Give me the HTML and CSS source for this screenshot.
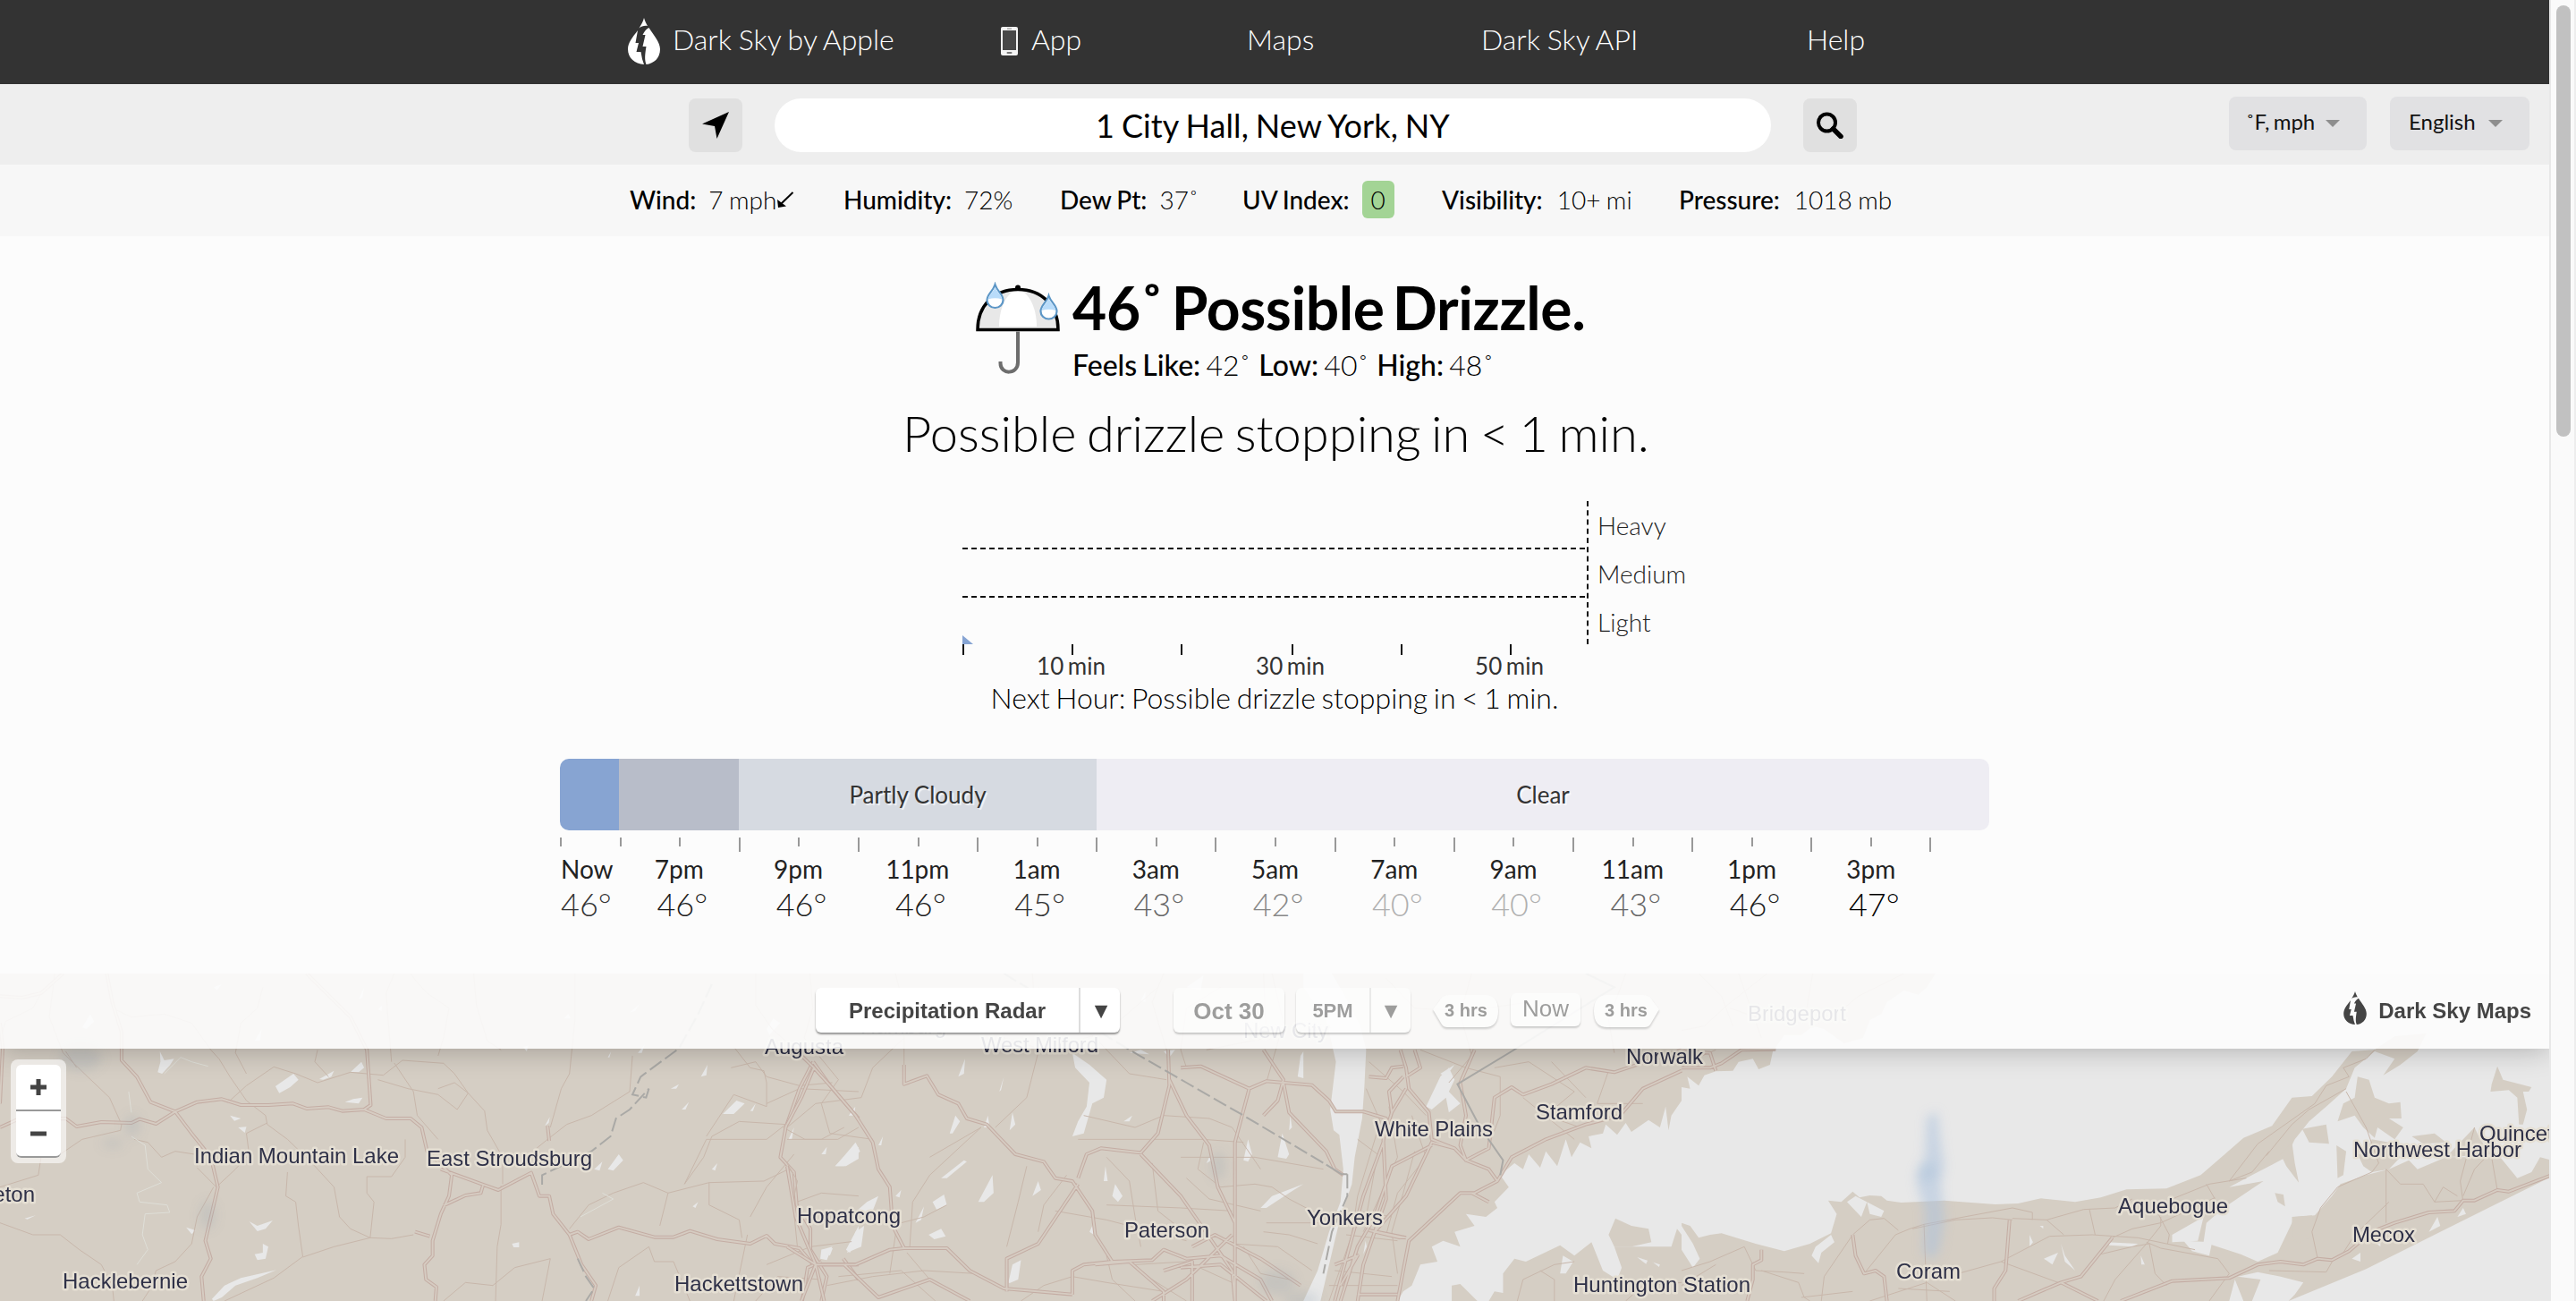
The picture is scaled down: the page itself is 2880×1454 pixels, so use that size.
FILE: index.html
```html
<!DOCTYPE html>
<html lang="en">
<head>
<meta charset="utf-8">
<title>Dark Sky - 1 City Hall, New York, NY</title>
<link rel="stylesheet" href="styles.css">
</head>
<body>
<svg class="defs" width="0" height="0">
  <symbol id="drop" viewBox="0 0 36 52">
    <path fill="currentColor" d="M18 0C19.200 4 20.500 6.500 22 9C18 8.500 15 9.500 12.500 11.500C15 7.500 17 4 18 0Z"/>
    <path fill="currentColor" d="M11 14C5 22 0 27.500 0 35C0 45 8 51.500 18 52L16 46L14.500 38H9.500L12 28H8.500L11 14Z"/>
    <path fill="currentColor" d="M23.500 11C28.500 19 36 27 36 35C36 45 29 51 20.500 52C18.500 47 19 41 20.500 32H16.500L19.500 19H16.500C18.500 15 20.500 12.500 23.500 11Z"/>
  </symbol>
</svg>
<div class="window">
<div class="page">
  <header class="nav">
    <a class="nav-brand"><svg class="logo" width="36" height="52"><use href="#drop"/></svg><span>Dark Sky by Apple</span></a>
    <a class="nav-app"><svg class="phone" width="19" height="32" viewBox="0 0 19 32"><rect width="19" height="32" rx="2" fill="#f4f4f4"/><rect x="2" y="4" width="15" height="22" fill="#484848"/><rect x="7" y="1.500" width="5" height="1" fill="#888"/><rect x="6.500" y="28" width="6" height="2" rx="1" fill="#777"/></svg><span>App</span></a>
    <a class="nav-maps">Maps</a>
    <a class="nav-api">Dark Sky API</a>
    <a class="nav-help">Help</a>
  </header>

  <div class="search">
    <button class="icon-button"><svg width="30" height="30" viewBox="0 0 30 30"><path d="M30 0L16.500 30L14 16L0 13.500Z"/></svg></button>
    <div class="search-field">1 City Hall, New York, NY</div>
    <button class="icon-button"><svg width="30" height="30" viewBox="0 0 30 30" fill="none" stroke="#000"><circle cx="11.500" cy="12" r="9.500" stroke-width="4"/><path d="M18.500 19L27 27.500" stroke-width="5.500" stroke-linecap="round"/></svg></button>
    <div class="select units"><span>˚F, mph</span><i class="caret"></i></div>
    <div class="select language"><span>English</span><i class="caret"></i></div>
  </div>

  <div class="details">
    <div class="detail wind"><b>Wind:</b><span>7 mph</span><svg width="20" height="19" viewBox="0 0 20 19"><path d="M18.500 1L5 14" stroke="#000" stroke-width="2"/><path d="M1 9L2 18L11 16.500Z"/></svg></div>
    <div class="detail humidity"><b>Humidity:</b><span>72%</span></div>
    <div class="detail dew"><b>Dew Pt:</b><span>37˚</span></div>
    <div class="detail uv"><b>UV Index:</b><span class="uv-badge">0</span></div>
    <div class="detail visibility"><b>Visibility:</b><span>10+ mi</span></div>
    <div class="detail pressure"><b>Pressure:</b><span>1018 mb</span></div>
  </div>

  <section class="current">
    <svg class="umbrella" width="96" height="106" viewBox="0 0 96 106">
      <path d="M3 53.500C3 27 21 8.500 48 8.500S93 27 93 53.500Z" fill="#e8e8e8"/>
      <path d="M27 50C27 31 34 15 44 10H52C62 15 69 31 69 50Z" fill="#fff"/>
      <path d="M3 53.500C3 27 21 8.500 48 8.500S93 27 93 53.500Z" fill="none" stroke="#000" stroke-width="3.500"/>
      <circle cx="48" cy="6.500" r="3"/>
      <path d="M48 55.500V90C48 104 28.500 104 28.500 91V89" fill="none" stroke="#6d6d6d" stroke-width="4"/>
      <g stroke="#5c96c6" stroke-width="2.200"><path d="M22.500 3C25 11 31.500 14 31.500 20.500A9 8.500 0 0 1 13.500 20.500C13.500 14 20 11 22.500 3Z" fill="#fff"/><path d="M82.500 15.500C85 23.500 91.500 26 91.500 33A9 8.500 0 0 1 73.500 33C73.500 26 80 23.500 82.500 15.500Z" fill="#fff"/></g>
      <path d="M22.500 6C25 12 29.500 14.500 30.500 19.500Q22.500 17 14.500 19.500C15.500 14.500 20 12 22.500 6ZM82.500 18.500C85 24.500 89.500 27 90.500 32Q82.500 29.500 74.500 32C75.500 27 80 24.500 82.500 18.500Z" fill="#b9dcfa"/>
    </svg>
    <div class="current-text">
      <h1>46˚ Possible Drizzle.</h1>
      <p><b>Feels Like:</b> <span>42˚</span><b>Low:</b> <span>40˚</span><b>High:</b> <span>48˚</span></p>
    </div>
  </section>
  <div class="summary">Possible drizzle stopping in &lt; 1 min.</div>

  <section class="hour-chart">
    <svg class="plot" width="700" height="172" viewBox="0 0 700 172">
      <path d="M0 53H699M0 107H699" stroke="#111" stroke-width="2" stroke-dasharray="6 4"/>
      <path d="M699 0V160" stroke="#111" stroke-width="2" stroke-dasharray="6 4.270"/>
      <path d="M0 150L12 160H0Z" fill="#86a4d3"/>
      <path d="M1 160V172M123 160V172M245 160V172M369 160V172M491 160V172M613 160V172" stroke="#111" stroke-width="2"/>
    </svg>
    <div class="levels"><span>Heavy</span><span>Medium</span><span>Light</span></div>
  </section>
  <div class="minutes"><span>10 min</span><span>30 min</span><span>50 min</span></div>
  <div class="next-hour">Next Hour: Possible drizzle stopping in &lt; 1 min.</div>

  <section class="timeline">
    <div class="stripes"><span class="drizzle"></span><span class="overcast"></span><span class="partly">Partly Cloudy</span><span class="clear">Clear</span></div>
    <div class="ticks"><i></i><i></i><i></i><i></i><i></i><i></i><i></i><i></i><i></i><i></i><i></i><i></i><i></i><i></i><i></i><i></i><i></i><i></i><i></i><i></i><i></i><i></i><i></i><i></i></div>
    <div class="hours"><span>Now</span><span>7pm</span><span>9pm</span><span>11pm</span><span>1am</span><span>3am</span><span>5am</span><span>7am</span><span>9am</span><span>11am</span><span>1pm</span><span>3pm</span></div>
    <div class="temps"><span class="t45">46°</span><span class="t46">46°</span><span class="t46">46°</span><span class="t46">46°</span><span class="t45">45°</span><span class="t43">43°</span><span class="t42">42°</span><span class="t40">40°</span><span class="t40">40°</span><span class="t43">43°</span><span class="t46">46°</span><span class="t47">47°</span></div>
  </section>

  <section class="map">
    <svg class="map-tiles" width="2850" height="366" viewBox="0 0 2850 366">
      <defs><filter id="soft" x="-50%" y="-50%" width="200%" height="200%"><feGaussianBlur stdDeviation="6"/></filter></defs>
      <rect width="2850" height="366" fill="#d5cec4"/>

      <!-- Pennsylvania and western New Jersey -->
      <g transform="translate(0 -28) scale(.6122 .33333)">
        <path class="water" d="M292 345L300 375L318 370L310 392L296 420L288 415L293 380ZM503 462L520 440L536 420L545 440L530 465L510 485ZM583 438L610 410L605 430L590 440ZM640 415L660 380L665 400L655 415ZM455 915L470 930L498 912L485 940L470 948ZM480 990L490 1000L485 1040L470 1045L465 1025L480 1020ZM387 1175L410 1130L440 1105L505 1078L470 1105L430 1130L405 1170L390 1182ZM435 600L450 598L447 618ZM420 560L440 570L428 578ZM340 935L357 945L350 958ZM935 990L948 985L948 1002L938 1002ZM1085 740L1100 715L1095 745ZM1110 740L1130 690L1138 710L1120 745ZM1320 555L1345 510L1360 520L1340 555ZM1525 730L1540 700L1568 665V705L1545 730ZM1545 1010L1568 930V975L1552 1020ZM1300 740L1310 720L1306 745ZM1245 540L1258 515L1252 540ZM1165 350L1178 320L1172 350ZM1110 365L1116 345L1113 365ZM1280 430L1292 390L1290 425ZM1225 470L1240 455L1235 470ZM1500 1010L1520 1000L1510 1045L1498 1040ZM1500 690L1510 665L1508 690ZM1440 640L1450 600L1446 640ZM1265 865L1275 850L1270 870ZM1160 1165L1168 1130L1168 1165ZM45 905L65 895L50 908ZM995 595L1004 565L1002 585ZM1550 560L1562 530L1560 560ZM1370 545L1380 520L1375 545ZM955 330L965 325L962 345ZM630 515L645 505L662 500L655 520ZM390 130L405 120L396 140ZM150 265L165 220L172 245L158 270ZM655 170L665 130L662 165ZM1400 270L1412 235L1425 250L1405 290ZM465 310L478 270L475 310ZM1030 235L1038 218L1042 235ZM1150 215L1168 185L1160 210ZM690 205L698 190L697 210Z"/>
        <g class="minor">
          <path d="M75 150L60 200L10 245L0 310M205 200L240 230L300 220L350 250L385 340L400 370L420 430L450 510L485 560L488 590L525 640L570 720L610 800L620 900L640 940L676 970L715 973L755 960M420 510L450 460L500 397L540 420L580 450L640 415L700 425L735 375L810 385L830 420L855 485L885 545L890 610L918 700L918 790M580 340L575 380L600 430M480 130L470 200L440 250L430 350L450 420M715 380L705 150L720 84M720 384L755 480L762 560L800 640M800 470L830 450L855 485L835 540L800 490L745 470L690 440M750 84L760 110L780 150L820 200L810 300L800 360M865 84L870 190L890 310L915 340M1050 84L1050 240L1040 420L1025 470L1005 600M1155 360L1150 480L1080 560L1035 590L1000 640L980 670M100 84L90 230L115 350L160 430L200 500L222 590L220 610L150 640L110 690L75 700L70 760L0 800M120 345L140 400M245 640L270 650L295 700L320 680L355 690L360 730M390 800L360 900L350 990L320 1050L285 1080L275 1140L260 1182M360 735L395 800L430 740L455 690L450 620L488 585M740 640L740 700L715 765H670V820L683 850L676 970M525 750L522 830L540 850L545 930L553 1033L500 1105L410 1182M553 1035L610 1000L676 970M0 920L60 960L110 960L145 1010L185 1060L205 1130L208 1182M915 795L915 925L908 1000L905 1182M810 1182L850 1120L900 1130L940 1070L1005 1040L990 1182M1040 940L1075 860L1120 820L1175 785L1220 820L1295 785L1395 780L1440 740M1220 820L1205 930M1295 785V860L1350 910L1355 970M1250 790L1290 640L1400 640L1435 590L1350 580L1300 630L1285 700L1250 790M1110 1182L1130 1070L1185 1000L1195 1050L1230 1050L1260 1182M1335 400L1380 380L1400 430L1460 460L1520 450M1340 330L1370 400L1395 410L1400 450L1400 530L1340 490L1290 630M1380 84L1380 190L1410 270L1490 400M1365 960L1340 1182M1450 690L1400 800L1370 900M1455 850L1500 820L1568 830M1430 600L1470 640L1530 640L1568 600M1400 520L1460 470L1568 480M1400 1060L1480 1000L1568 980M1380 1182L1420 1100L1500 1110"/>
        </g>
        <g class="major-case"><path id="pa-major" d="M195 84L205 180L222 280L222 375L250 430L275 515L320 547L350 620L385 700L398 800L375 980L385 1040L368 1100L372 1182M0 600L30 575L120 570L140 597L185 582L240 585L255 572L285 588L320 547L360 515L405 505L440 525H490L535 520L560 537L600 532L625 545L665 540L705 570L750 570L770 600L780 680L825 760L820 830L805 890L790 980V1030L775 1060L778 1110L797 1135L795 1182M560 84L640 230L670 340L677 525L665 540M785 965L758 950M805 740L880 790L910 810L970 752L985 830H1003L1010 890L1040 960L1055 950L1075 975L1130 935L1195 968H1230L1260 947L1310 975L1370 990L1400 963L1415 990L1460 1005L1485 1060H1568M810 862L850 828L878 820L882 795M1485 380L1460 470L1435 600L1425 700L1450 750L1455 860L1480 940L1480 1010L1510 1100L1500 1182M1485 380L1520 470L1568 570M1040 960L1062 1060L1088 1130L1080 1182M1465 1182L1475 1070L1500 1050M1540 1040L1568 1110M0 250L5 330L0 520M0 160L40 165L75 150L115 84M1000 595L1003 645"/></g>
        <use href="#pa-major" class="major-core"/>
        <path class="border" d="M1300 120L1275 220L1240 335L1170 430L1155 490L1180 500L1185 470L1150 540L1125 570L1115 630L1080 680L990 760V800M1055 1040L1070 1100L1085 1140L1070 1182"/>
        <path class="river" d="M235 480L240 550M240 630L265 660L270 740L295 785L250 820L255 850L305 860L310 885L265 890L260 960L270 1010L250 1060M300 420L330 365L350 380L380 395M1100 820L1120 840L1060 900"/>
      </g>

      <!-- New Jersey, Hudson and Long Island Sound -->
      <g transform="translate(880 -28) scale(.6378 .33333)">
        <path class="water" d="M905 84H955L975 150L1005 260L1015 340L1012 460L1008 570L995 700L990 790L970 900L955 1020L935 1182H905L930 1080L950 950L970 850L975 740L968 625L958 610L952 540L962 380L945 240L905 130ZM1568 510L1550 560L1545 610L1540 530L1530 600L1510 575L1480 615L1470 585L1455 625L1435 590L1430 620L1405 630L1410 670L1390 650L1375 700L1365 640L1350 730L1330 680L1320 735L1300 690L1290 740L1275 720L1250 760L1265 800L1240 850L1245 870L1225 900L1190 890L1205 930L1170 950L1180 1000L1150 980L1130 1000L1140 1050L1110 1060L1095 1130L1080 1150L1070 1182H1165L1165 1130L1180 1125L1210 1182H1230L1240 1150L1255 1155V1090L1275 1040L1295 1050L1355 995L1380 1030L1410 985L1430 1080L1455 1110L1463 1070L1450 1000L1550 1000L1560 940L1568 960ZM500 350L530 390L560 440L555 500L535 520L520 620L500 630L510 580L525 530L530 450L505 400ZM300 430L312 370L310 420ZM372 480L380 430L375 475ZM285 620L295 560L303 580L290 620ZM390 610L395 550L400 590ZM345 600L352 560L355 600ZM270 770L310 710L315 715L280 770ZM335 850L360 760L362 820L345 850ZM85 730L120 650L128 680L100 730ZM105 1020L120 950L135 930L130 1000ZM388 1120L395 1060L410 1045L405 1110L390 1122ZM860 700L868 620L880 690L875 705ZM570 830L575 790L588 830L580 850ZM555 780L558 730L562 780ZM800 710L808 640L815 690L808 715ZM830 870L850 830L905 790L880 820L840 870ZM1120 530L1145 430L1160 400L1170 440L1160 480L1180 520L1160 550L1155 500L1130 540ZM1145 420L1170 390L1155 430ZM895 430L900 360L905 345L905 435ZM880 610L882 560L885 600ZM255 850L275 825L280 860L262 875ZM430 830L440 780L445 810ZM530 950L540 910L538 960ZM60 1010L80 1005L75 1030ZM248 960L270 940L278 965L258 975ZM160 660L168 630L165 660ZM190 830L200 810L197 835ZM700 130L730 90L725 140ZM620 175L628 145L628 180ZM660 345L680 340L670 365ZM225 920L240 865L235 910ZM735 720L740 700L744 710ZM1010 1025L1014 980L1016 1000ZM110 900L140 850L160 830L150 880ZM600 350L620 340L635 355ZM590 580L605 560L600 580ZM1355 1090L1360 1030L1378 1050L1365 1090ZM1490 1035L1530 1060L1525 1085L1500 1050Z"/>
        <path class="land" d="M1440 960L1452 905L1480 930L1510 940L1515 985L1480 1000L1450 1000ZM1500 1080L1510 1040L1530 1070L1525 1100Z"/>
        <g class="minor">
          <path d="M40 84L45 200L30 300L90 440L60 520L75 620L150 640M190 84L205 200L205 390M205 300L150 400L130 500L50 520L0 600M430 84L440 350L420 500L365 600M440 130L540 300L600 420L665 440M380 300L450 340L560 280L650 130M660 84L640 180L665 340M735 340L840 300L835 84M250 700L340 600L250 760L220 850L215 1000M0 640L60 640L100 600M420 730L405 850L385 1000M490 760L450 860L440 950M520 560L610 600L660 560L740 570L780 600L830 740M510 640L640 640L730 640L800 650M690 700H820L940 740M730 650L720 740L760 800L820 790L850 800L880 840L940 900M560 860L690 870L780 880M560 700L600 780L610 900L620 1000M470 880L560 910L640 950L700 980M640 720L650 880L690 940M700 770L740 840L830 880M840 920H940M835 950L880 960L930 990M780 990L860 1000L920 1080M640 1110L700 1182M560 1030L570 1110L610 1182M410 1182L450 1130L500 1100L560 1120L660 1150M1015 470L1040 580L1000 830L990 960L950 1182M1000 640L1035 690L1015 900M1055 530L1070 700L1030 870L1010 950M1095 560L1120 700L1070 820L1050 960M1100 680L1080 820L1060 950L1070 1090M1020 380L1080 480L1120 560M1200 84L1180 220L1200 360L1160 450M1050 100L1100 200L1190 210L1300 180M1110 340L1190 400L1250 430L1250 560L1230 660M1240 400L1300 380L1380 480L1330 560L1390 600M1290 500L1380 640M1340 380L1400 500M1440 410L1420 520L1500 520M1470 84L1440 240L1450 350M0 720L18 780L10 850L18 1000M90 1100L200 1080L260 1182M70 1130L150 1100L240 1080L330 1090M180 1090L190 960L180 880M210 1020L250 1110M200 920L240 900L280 860M1280 1182L1290 1110L1345 1060L1380 1050M1345 1182V1110L1320 1080M1470 1182L1500 1130L1568 1120M610 1060L700 1050L780 1120M800 1000L830 1090L880 1110M960 1080L1060 1100M950 1130H1070M980 960L1070 980M1000 880L1060 900M850 84L870 250L840 450M760 130L700 200L690 340L700 400"/>
        </g>
        <g class="major-case"><path id="nj-major" d="M0 590L25 500L47 400L20 350M47 400L80 470L120 560L150 650L160 740L180 800L185 930L205 1005H280L320 1080L380 1140L500 1160M205 390V455L245 427L265 490L300 520L315 570L350 590L400 690L450 715L470 770L500 780L535 880L540 960L570 1050M0 1000L50 1060H120L180 1010L205 1005M25 1182L50 1060L15 900L0 730M50 1060L65 1182M100 1060L160 1170L250 1110L320 1182M510 790L440 990L385 1040V1150M510 770L525 690L550 670L620 685L650 620L670 460L668 340M620 690L690 830L730 940L780 1080L785 1182M670 440L700 560L740 660L755 800L785 920V1060M690 400L725 395L810 470L840 445L920 458L950 510L962 547H1010L1050 570L1045 650L1010 830L960 1182M810 470L785 650V800L785 1182M870 450L880 550L945 680L960 740L975 760M835 340L870 440L860 510L835 560M500 1160L500 1080L520 1060L570 1050L640 1045L660 1010L700 1040L760 1030L830 1110L850 1182M540 1060L600 1050L660 1150L660 1182M660 1080L710 1050V1182M690 1070L760 1060L840 1182M710 1000L750 960L830 1040L900 1130M640 1182L700 1110L780 960M1075 340L1085 400L1090 470L1125 550L1130 640L1170 670L1190 710L1230 740L1245 780L1205 820H1180L1090 980L1080 1080L1070 1182M1020 430L1050 435L1060 400L1080 395M1100 340L1110 400L1085 430M1205 340L1180 450L1190 560L1180 660L1190 710L1230 670L1240 500L1270 465L1290 490L1340 455L1400 400L1450 415L1568 340M1568 410L1500 470L1460 560L1400 590L1330 640L1270 700L1245 780M1130 660L1060 730L1030 900L1000 1000L970 1182M1045 640L1050 840L1010 1060L1000 1182M1060 550L1055 480L1080 430M1085 470L1060 550L1045 640M1170 670L1130 650L1085 830L1030 950L1075 970M1085 970L1020 945M1200 820L1230 850M960 1060L1000 1030L970 1130M1000 1160H1070"/></g>
        <use href="#nj-major" class="major-core"/>
        <path class="border dashed" d="M380 84L600 340L700 450L800 560L945 725"/>
        <path class="border solid" d="M945 725L972 757H982M1270 345L1175 455L1215 600L1255 710L1250 760M1400 84L1450 130L1270 345"/>
        <path class="border dashed" d="M982 757V830L955 950L940 1090"/>
      </g>

      <!-- Connecticut coast and Long Island -->
      <g transform="translate(1880 -28) scale(.6378 .33333)">
        <path class="water" d="M445 84L430 130L415 155L390 140L360 180L350 220L330 240L318 300L285 318L250 270L230 260L210 290L180 290L160 345L155 390L135 405L125 370L100 380L90 410L60 412L40 425L30 460L10 430L15 470L0 465V920L15 930L30 970L50 960L70 955L130 990L180 1015L225 990L262 955L272 890L257 845L280 850L300 815L312 835L330 828L350 830L360 845L385 852L460 845L550 858L590 855L630 838L690 850L735 835L780 808L850 805L910 760L940 710L985 635L1035 595L1070 500L1105 495L1140 430L1175 345L1215 340L1250 295L1305 285L1290 345L1260 390L1230 425L1250 370L1215 345L1180 400L1165 470L1130 530L1100 580L1075 640L1060 700L1000 760L960 800L1020 780L950 870L920 920L915 985L980 1025L1010 1050L1045 1020L1075 900L1110 895L1140 830L1155 790L1200 760L1240 740L1275 710L1290 740L1340 700L1435 700L1465 770L1490 750L1505 700L1525 710V84Z"/>
        <path class="water" d="M1064 1182L1200 1075L1330 950L1525 765V1182ZM975 1100L1010 1085L1050 1100L1090 1120L1075 1160L1064 1182H1000L1015 1110ZM960 1182L970 1110L985 1182ZM0 930L20 990L32 1040L20 1070L0 1010ZM235 1000L262 960L268 985L245 1020L240 1055L228 1030ZM290 850L305 830L355 880L350 900L330 890L325 850L315 900L300 870ZM635 1040L660 1020L650 1060ZM610 960L616 985L610 1000ZM628 930H634V940ZM665 990L672 1030L690 1080L672 1050ZM745 985L800 990L790 1000L750 995ZM805 1030L812 1060L806 1060ZM1310 950L1325 900L1330 930ZM1360 900L1370 870L1375 890ZM1215 985L1225 960L1225 1000ZM860 960L915 900L905 980L860 985ZM880 980L930 985L925 1030L895 1015ZM1175 1040L1190 1020L1190 1050Z"/>
        <path class="land" d="M1185 430L1205 440L1215 500L1240 520L1260 515L1262 570L1240 570L1265 600L1250 640L1220 600L1215 635L1195 600L1180 560L1150 580L1160 520L1180 500ZM1108 500L1120 490L1118 520ZM1088 605L1130 590L1135 655L1100 650ZM1070 650L1075 720L1082 785L1060 730L1050 690ZM1148 660L1165 680L1160 760L1150 770ZM1040 820L1055 825L1058 865L1045 850ZM1070 900L1105 895L1110 960L1080 990L1070 960ZM1185 690L1240 670L1260 700L1240 740L1210 750L1195 730ZM1340 700L1390 600L1400 640L1420 690ZM1280 630L1320 620L1340 650L1300 655ZM1420 455L1430 395L1440 440L1490 465L1485 480L1475 480L1482 540L1475 590L1468 590L1465 500L1450 475L1418 480ZM1210 640L1240 650L1260 670L1240 690L1200 680Z"/>
        <g class="minor">
          <path d="M0 275L40 260L80 190L150 84M30 84L70 160L90 260M230 84L215 250M390 84L310 160L260 240M100 84L140 300M85 200L160 250M0 390L60 340M0 1080L50 1050L110 1000L130 1080L180 1085L215 1090M0 1130L60 1060M140 1080L205 1120L215 1170L225 1182M245 1182L250 1100L300 960L330 910L355 905L380 945M320 1090L375 960L400 940L425 925L580 870L615 885V910M425 925L430 1182M485 1090L560 1050L645 965L720 960L800 970L850 990L900 1010M580 905L640 910L705 875L760 870L790 840M560 1050L660 1120M640 910L670 960M715 875L725 960M755 970L790 940L840 920L920 850L935 835M830 870L855 960L852 990M840 900V930L815 990L760 1110L740 1182M840 880L860 840L925 790L990 770M820 990L830 1090L850 1130M815 985L840 1005L940 1040L960 1090L925 1182M1025 695L1040 660L1070 590L1100 540L1165 470M920 790L935 840M960 780L1000 750L1030 680M1030 1080L1130 1085L1145 1035M1150 800L1120 870L1105 950L1115 1040M1150 800L1210 750L1222 720L1200 600L1165 480M1235 740V920M1235 740L1260 790L1300 790L1320 850L1370 845M1370 850L1365 780L1390 600M1320 850L1335 800L1360 830M1240 850L1180 960L1160 1020M1370 830L1390 740L1410 700M1430 810L1420 700M330 1182L430 1120L480 1182M210 1170L300 1150M380 1140L470 1150"/>
        </g>
        <g class="major-case"><path id="li-major" d="M0 400L50 400L70 385L105 340L165 338M60 410L50 350L0 345M140 1010V1045L125 1060V1110L115 1182M300 960L305 1030L320 1090L340 1080L355 1100L360 1182M575 910L568 1080L548 1140V1182M590 1182L665 1120L700 1100L755 970M665 1120L730 1182M770 1182L860 1115L960 1105L1010 1060L1050 1050L1090 1060L1115 1040L1140 1045L1170 1015L1210 950L1250 920L1310 885L1355 880L1370 845H1390L1430 810L1450 815L1525 760"/></g>
        <use href="#li-major" class="major-core"/>
        <g class="minor"><path d="M735 1025L790 1000L820 990M405 940L480 910L545 903L580 910M960 780L1010 655L1110 520L1130 460L1170 430L1160 400L1200 370L1215 340"/></g>
      </g>

      <g filter="url(#soft)" fill="#a9c2dd">
        <path d="M2154 160L2166 155L2170 190L2174 215L2170 235L2174 275L2168 310L2160 320L2150 312L2152 265L2144 240L2142 225L2152 205Z" opacity=".5"/><circle cx="2155" cy="222" r="11" opacity=".4"/>
        <g fill="#8d9aa8" opacity=".2"><ellipse cx="90" cy="95" rx="24" ry="14"/><ellipse cx="148" cy="170" rx="9" ry="12"/><ellipse cx="126" cy="190" rx="12" ry="5"/><ellipse cx="232" cy="270" rx="9" ry="16"/><ellipse cx="1362" cy="215" rx="8" ry="16"/><ellipse cx="1428" cy="345" rx="20" ry="14"/><ellipse cx="1455" cy="365" rx="20" ry="10"/></g>
      </g>

      <g class="places">
        <text x="855" y="90" textLength="88">Augusta</text>
        <text x="1097" y="88" textLength="131">West Milford</text>
        <text x="962" y="67" textLength="96">Hamburg</text>
        <text x="1390" y="72" textLength="95">New City</text>
        <text x="1954" y="53" textLength="110">Bridgeport</text>
        <text x="1818" y="101" textLength="86">Norwalk</text>
        <text x="1717" y="163" textLength="97">Stamford</text>
        <text x="1537" y="182" textLength="132">White Plains</text>
        <text x="217" y="212" textLength="229">Indian Mountain Lake</text>
        <text x="477" y="215" textLength="185">East Stroudsburg</text>
        <text x="39" y="255" text-anchor="end">Hazleton</text>
        <text x="70" y="352" textLength="140">Hacklebernie</text>
        <text x="891" y="279" textLength="116">Hopatcong</text>
        <text x="754" y="355" textLength="144">Hackettstown</text>
        <text x="1257" y="295" textLength="95">Paterson</text>
        <text x="1461" y="281" textLength="85">Yonkers</text>
        <text x="1759" y="356" textLength="198">Huntington Station</text>
        <text x="2120" y="341" textLength="72">Coram</text>
        <text x="2368" y="268" textLength="123">Aquebogue</text>
        <text x="2630" y="300" textLength="70">Mecox</text>
        <text x="2772" y="187">Quincetree Landing</text>
        <text x="2631" y="205" textLength="188">Northwest Harbor</text>
      </g>
    </svg>

    <div class="map-bar">
      <div class="control layer"><span>Precipitation Radar</span><i>▼</i></div>
      <div class="time-controls">
        <div class="control date"><span>Oct 30</span></div>
        <div class="control time"><span>5PM</span><i>▼</i></div>
        <div class="step back"><svg width="74" height="38" viewBox="0 0 74 38"><path d="M0 17L10 34Q12 37 16 37H58Q73 37 73 19T58 1H18Q10 1 7 8Z"/></svg><span>3 hrs</span></div>
        <div class="now">Now</div>
        <div class="step ahead"><svg width="74" height="38" viewBox="0 0 74 38"><path d="M74 17L64 34Q62 37 58 37H16Q1 37 1 19T16 1H56Q64 1 67 8Z"/></svg><span>3 hrs</span></div>
      </div>
      <a class="maps-link"><svg width="26" height="37"><use href="#drop"/></svg><span>Dark Sky Maps</span></a>
    </div>
    <div class="zoom-control">
      <button><svg width="20" height="20"><path d="M1 10H19M10 1V19"/></svg></button>
      <button><svg width="20" height="20"><path d="M1 10H19"/></svg></button>
    </div>
  </section>
</div>
<div class="scrollbar"><div class="thumb"></div></div>
</div>
</body>
</html>
```
FILE: styles.css
```css
* { box-sizing: border-box; }
body { margin: 0; background: #fcfcfc; color: #000; font-family: Lato, sans-serif; overflow: hidden; }
button { border: 0; padding: 0; font: inherit; display: flex; align-items: center; justify-content: center; }
i { font-style: normal; }
.defs { position: absolute; }
.window { display: flex; width: 2880px; height: 1454px; }
.page { width: 2850px; height: 1454px; overflow: hidden; display: flex; flex-direction: column; }
.page > * { flex-shrink: 0; }

.scrollbar { position: relative; width: 30px; padding: 6px 4px 0 6px; background: #fafafa; border-left: 2px solid #e8e8e8; border-right: 2px solid #ededed; }
.thumb { width: 16px; height: 482px; border-radius: 8px; background: #c1c1c1; }

/* Navigation */
.nav { height: 94px; background: #333; color: #fff; display: flex; align-items: center; padding: 0 0 8px 702px; font-size: 32px; font-weight: 300; white-space: nowrap; word-spacing: -.03em; }
.nav a { display: flex; align-items: center; }
.nav-brand { width: 417px; }
.nav-brand span { margin-left: 14px; }
.nav-app { width: 275px; }
.nav-app span { margin-left: 15px; }
.nav-maps { width: 262px; }
.nav-api { width: 364px; }
.logo { margin-top: 6px; }
.phone { margin-top: 6px; }

/* Search */
.search { height: 90px; background: #eee; display: flex; padding: 14px 0 0 770px; }
.icon-button { width: 60px; height: 60px; margin-top: 2px; border-radius: 8px; background: #e0e0e0; }
.search-field { width: 1114px; height: 60px; margin: 2px 36px 0; border-radius: 30px; background: #fff; font-size: 36px; line-height: 61px; text-align: center; letter-spacing: .1px; word-spacing: -.04em; }
.select { height: 60px; border-radius: 8px; background: #e1e1e3; color: #111; font-size: 24px; line-height: 56px; display: flex; align-items: flex-start; justify-content: space-between; word-spacing: -.08em; }
.units { width: 154px; margin-left: 416px; padding: 0 30px 0 19px; }
.language { width: 156px; margin-left: 26px; padding: 0 30px 0 21px; }
.caret { margin-top: 26px; border: 8px solid transparent; border-top-color: #8e8e8e; border-bottom: 0; }

/* Details */
.details { height: 80px; background: #f7f7f7; display: flex; align-items: center; padding: 0 0 2px 704px; font-size: 28px; white-space: nowrap; word-spacing: -.04em; }
.detail { display: flex; align-items: center; }
.detail b { font-weight: 500; margin-right: 14px; }
.detail span { font-weight: 300; }
.wind { width: 239px; }
.humidity { width: 242px; }
.dew { width: 204px; }
.uv { width: 223px; }
.visibility { width: 265px; }
.visibility b, .pressure b { margin-right: 16px; }
.uv .uv-badge { width: 36px; height: 42px; border-radius: 6px; background: #a3d495; line-height: 42px; text-align: center; }

/* Current conditions */
.current { height: 180px; padding: 40px 0 0 1090px; display: flex; }
.umbrella { margin-top: 11px; }
.current-text { margin-left: 13px; white-space: nowrap; }
.current h1 { margin: 0; font-size: 66px; line-height: 80px; font-weight: 700; letter-spacing: -.4px; word-spacing: -.1em; }
.current p { margin: 4px 0 0; font-size: 32px; line-height: 40px; word-spacing: -.06em; }
.current p b { font-weight: 500; }
.current p span { font-weight: 300; margin-right: 9px; }
.summary { height: 116px; padding-left: 3px; text-align: center; font-size: 56px; line-height: 80px; font-weight: 300; word-spacing: -.067em; }

/* Next hour */
.hour-chart { height: 172px; padding-left: 1076px; display: flex; }
.levels { margin-left: 10px; display: flex; flex-direction: column; font-size: 28px; line-height: 54px; font-weight: 300; color: #222; }
.minutes { height: 28px; margin-top: -2px; padding-left: 1075px; display: flex; font-size: 26px; line-height: 28px; color: #333; word-spacing: -.08em; }
.minutes span { width: 245px; text-align: center; }
.next-hour { height: 90px; padding-top: 2px; text-align: center; font-size: 32px; line-height: 40px; font-weight: 300; word-spacing: -.065em; }

/* Timeline */
.timeline { height: 240px; width: 1598px; margin-left: 626px; }
.stripes { display: grid; grid-template-columns: 66px 134px 400px 1fr; height: 80px; border-radius: 10px; overflow: hidden; color: #333; font-size: 26px; line-height: 80px; text-align: center; text-shadow: 2px 2px 1px rgba(255, 255, 255, .7); }
.drizzle { background: #87a4d2; }
.overcast { background: #b8bdc9; }
.partly { background: #d6dae1; }
.clear { background: #eeedf3; }
.ticks { display: grid; grid-template-columns: repeat(24, 1fr); height: 24px; padding-top: 8px; }
.ticks i { height: 10px; border-left: 2px solid #999; }
.ticks i:nth-child(2n+4) { height: 16px; }
.hours, .temps { display: grid; grid-template-columns: 1fr repeat(11, 2fr) 1fr; width: 1599px; text-align: center; }
.hours { margin-top: 1px; font-size: 28px; line-height: 36px; color: #222; }
.hours span:first-child { text-align: left; padding-left: 1px; }
.temps { font-size: 36px; line-height: 42px; font-weight: 300; }
.temps span { padding-left: 7px; }
.temps span:first-child { text-align: left; padding-left: 1px; }
.t47 { color: #000; } .t46 { color: #1c1c1c; } .t45 { color: #333; } .t43 { color: #666; } .t42 { color: #888; } .t40 { color: #b0b0b0; }

/* Map */
.map { position: relative; height: 366px; font-family: "Liberation Sans", Arial, sans-serif; color: #444; overflow: hidden; }
.map-tiles { display: block; }
.water { fill: #e8e8e8; }
.land { fill: #d5cec4; }
.minor, .major-case, .major-core, .border, .river { fill: none; vector-effect: non-scaling-stroke; }
.minor path, .major-case path { vector-effect: non-scaling-stroke; }
.minor { stroke: #c8b7ab; stroke-width: 1px; }
.major-case { stroke: #c4ada4; stroke-width: 4px; stroke-linejoin: round; }
.major-core { stroke: #d6ccc2; stroke-width: 1.900px; }
.border { stroke: #aaa9a6; stroke-width: 2px; stroke-dasharray: 16 5; }
.border.solid { stroke-dasharray: none; }
.river { stroke: #dfdfd8; stroke-width: 1px; }
.places { font-size: 24px; fill: #2e3047; stroke: #e5dfd3; stroke-width: 5px; stroke-linejoin: round; paint-order: stroke; }

.map-bar { position: absolute; inset: 0 0 auto 0; height: 84px; padding: 16px 20px 0 912px; background: rgba(253, 253, 253, .89); box-shadow: 0 0 32px rgba(0, 0, 0, .27); clip-path: inset(0 0 -60px 0); display: flex; font-weight: 700; white-space: nowrap; }
.control { height: 50px; border-radius: 6px; background: #fff; box-shadow: 0 2px 2px rgba(0, 0, 0, .4); display: flex; font-size: 24px; line-height: 52px; text-align: center; }
.control span { flex: 1; }
.control i { width: 46px; padding-left: 2px; border-left: 2px solid #ddd; font-size: 19px; font-family: "DejaVu Sans", sans-serif; font-weight: 400; line-height: 50px; }
.layer { width: 340px; }
.time-controls { display: flex; margin-left: 60px; opacity: .5; }
.date { width: 124px; font-size: 26px; }
.time { width: 128px; margin-left: 13px; font-size: 22px; }
.time i { padding-left: 0; }
.step { position: relative; width: 74px; height: 38px; margin: 7px 0 0 25px; font-size: 20px; line-height: 37px; text-align: center; }
.step svg { position: absolute; left: 0; top: 0; overflow: visible; fill: #fff; filter: drop-shadow(0 2px 1px rgba(0, 0, 0, .35)); }
.step span { position: relative; }
.step.ahead { margin-left: 14px; }
.now { width: 78px; height: 37px; margin: 6px 0 0 13px; border-radius: 6px; background: #fff; box-shadow: 0 2px 2px rgba(0, 0, 0, .35); font-size: 26px; font-weight: 400; line-height: 34px; text-align: center; }
.maps-link { display: flex; height: 37px; margin: 4px 0 0 auto; font-size: 24px; line-height: 43px; }
.maps-link span { margin-left: 13px; }

.zoom-control { position: absolute; left: 12px; top: 96px; width: 62px; padding: 6px; border-radius: 8px; background: rgba(255, 255, 255, .6); }
.zoom-control button { width: 50px; height: 52px; border-radius: 6px 6px 0 0; background: #fff; border-bottom: 2px solid #999; }
.zoom-control button + button { border-radius: 0 0 6px 6px; }
.zoom-control svg { fill: none; stroke: #444; stroke-width: 5px; }
```
